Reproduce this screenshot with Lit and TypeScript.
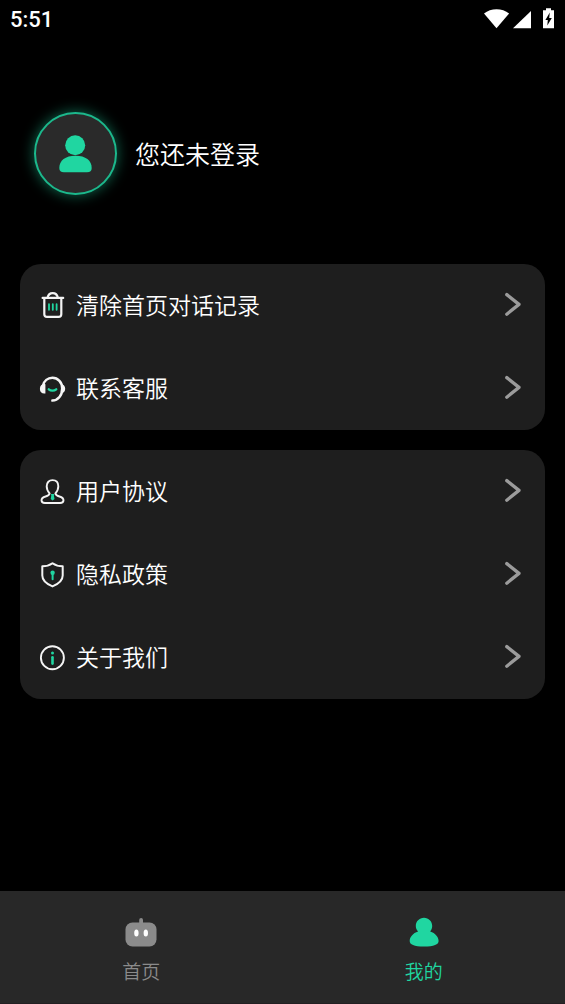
import { LitElement, html, css, svg } from "lit";
import { customElement, property, state } from "lit/decorators.js";

const icons = {
  trash: svg`
    <path stroke-width="2.200" d="M9.600 6.500C10.200 3.600 11.900 2.100 14.700 2.100s4.500 1.500 5.100 4.400" />
    <path stroke-width="2.200" d="M4.600 6.900h20.600M6.300 7.500v15.700c0 1.800 1 2.600 2.700 2.600h11.600c1.700 0 2.700-.8 2.700-2.600V7.500" />
    <path class="accent" stroke-width="1.800" d="M11 13.200v5.600M14.800 13.200v5.600M18.600 13.200v5.600" />`,
  service: svg`
    <path d="M5 11.500C6 7 9.700 3.700 14.400 3.700c5.500 0 9.900 4.600 9.900 10.900 0 6.700-4.200 11.800-9.900 12" stroke-width="2.500" />
    <path class="solid" d="M7.400 10.200v9.200c-3.300.6-5.500-1.300-5.500-4.500s2.200-5.200 5.500-4.700zM23 10.200c2.600 0 4.200 1.900 4.200 4.500s-1.500 4.600-4.400 4.600z" />
    <path class="accent" stroke-width="2.400" d="M10.800 15.300c2 1.700 5.400 1.700 7.400 0" />`,
  user: svg`
    <path stroke-width="1.900" d="M11.600 16.400C9.800 14.600 8.700 12 8.700 9.300c0-3.900 2.400-6.200 5.800-6.200s5.800 2.300 5.800 6.200c0 2.700-1.100 5.300-2.900 7.100.2 2 1.900 2.500 4 3.100 2.600.7 4.100 1.900 4.100 3.800 0 1.900-1.300 2.700-3.400 2.700H6.900c-2.100 0-3.400-.8-3.400-2.700 0-1.900 1.500-3.100 4.100-3.800 2.100-.6 3.800-1.100 4-3.100z" />
    <path class="accent-fill" d="M12.900 17h3.400l-.4 1.500.6 3.500-1.900 1.500-1.900-1.500.6-3.500z" />`,
  shield: svg`
    <path stroke-width="2" d="M14.500 3.200c2.800 2 6.100 3.100 10.200 3.100v9.200c0 5.200-4.400 8.500-10.200 10.900C8.700 24 4.300 20.700 4.300 15.500V6.300c4.100 0 7.400-1.100 10.200-3.100z" />
    <circle class="accent-fill" cx="14.600" cy="12.700" r="2.200" />
    <path class="accent" stroke-width="2" d="M14.600 14v5.200" />`,
  info: svg`
    <circle cx="14.400" cy="14.800" r="11.500" stroke-width="1.900" />
    <circle class="accent-fill" cx="14.500" cy="10" r="1.500" />
    <path class="accent" stroke-width="2.600" d="M14.500 14.300v6.300" />`,
};

type IconName = keyof typeof icons;

@customElement("menu-row")
class MenuRow extends LitElement {
  @property() icon: IconName = "info";
  @property() label = "";

  static styles = css`
    :host { display: block; }
    .row {
      width: 100%;
      height: 83px;
      display: flex;
      align-items: center;
      padding: 0 24px 0 18px;
      border: 0;
      background: none;
      color: #fff;
      font: inherit;
      text-align: left;
      cursor: pointer;
    }
    .icon {
      flex: none;
      width: 29px;
      height: 29px;
      margin-right: 9px;
      fill: none;
      stroke: #f4f4f4;
      stroke-width: 2;
      stroke-linecap: round;
      stroke-linejoin: round;
    }
    .solid { fill: #f4f4f4; stroke: none; }
    .accent { stroke: #20d6a1; }
    .accent-fill { fill: #20d6a1; stroke: none; }
    .label { flex: 1; padding-bottom: 3px; font-size: 23px; line-height: 34px; }
    .chevron { flex: none; width: 16px; height: 29px; }
  `;

  render() {
    return html`
      <button class="row" type="button">
        <svg class="icon" viewBox="0 0 29 29" aria-hidden="true">${icons[this.icon]}</svg>
        <span class="label">${this.label}</span>
        <svg class="chevron" viewBox="0 0 16 29" fill="none" stroke="#9b9b9b" stroke-width="3.300" stroke-linecap="round" stroke-linejoin="round" aria-hidden="true">
          <path d="M1.800 3.600 14 13.400 1.800 23.200" />
        </svg>
      </button>`;
  }
}

@customElement("app-root")
class AppRoot extends LitElement {
  @state() private tab = "mine";

  static styles = css`
    :host {
      display: flex;
      flex-direction: column;
      min-height: 100vh;
      background: #000;
      color: #fff;
      font-family: "Noto Sans CJK SC", sans-serif;
      font-weight: 350;
    }
    .status {
      display: flex;
      align-items: center;
      justify-content: space-between;
      height: 40px;
      padding: 0 10px;
      font: 500 22px/26px Roboto, sans-serif;
    }
    .signals { display: block; width: 72px; height: 24px; }
    .profile {
      display: flex;
      align-items: center;
      gap: 18px;
      padding: 72px 34px 69px;
    }
    .avatar {
      display: flex;
      box-sizing: border-box;
      width: 83px;
      height: 83px;
      padding: 0;
      border: 2px solid #1cb88c;
      border-radius: 50%;
      background: #2a2a2a;
      box-shadow: 0 0 14px #20d6a180;
    }
    .avatar svg { width: 79px; height: 79px; }
    .name { margin: 0; padding-bottom: 2px; font-size: 25px; line-height: 36px; font-weight: inherit; }
    .menus {
      flex: 1;
      display: flex;
      flex-direction: column;
      gap: 20px;
      padding: 0 20px 20px;
    }
    .card { background: #1e1e1e; border-radius: 21px; }
    .tabs {
      display: grid;
      grid-template-columns: 1fr 1fr;
      background: #282828;
      border-bottom: 1px solid #231f22;
    }
    .tab {
      display: flex;
      flex-direction: column;
      align-items: center;
      gap: 10px;
      padding: 26px 0 18px;
      border: 0;
      background: none;
      color: #8b8b8b;
      font: inherit;
      font-size: 19px;
      line-height: 28px;
      cursor: pointer;
    }
    .tab svg { width: 32px; height: 30px; }
    .active { color: #20d6a1; }
  `;

  private tabButton(id: string, label: string, art: unknown) {
    return html`
      <button class="tab ${this.tab === id ? "active" : ""}" type="button" @click=${() => (this.tab = id)}>
        <svg viewBox="0 0 32 30" fill="currentColor" aria-hidden="true">${art}</svg>
        <span>${label}</span>
      </button>`;
  }

  render() {
    return html`
      <header class="status">
        <span>5:51</span>
        <svg class="signals" viewBox="0 0 72 24" fill="#fff" aria-hidden="true">
          <path d="M1 5.600C7.800-.1 19.300-.1 26.100 5.600L13.500 20.300z" />
          <path d="M48 3v17.200H30z" />
          <path d="M63 2.200V.2h5v2h3v18H60v-18z" />
          <path d="M66.800 4.500 62.400 12h2.400l-.5 5.600L68.800 10h-2.600z" fill="#000" />
        </svg>
      </header>
      <section class="profile">
        <button class="avatar" type="button" aria-label="登录">
          <svg viewBox="0 0 79 79" fill="#20d6a1" aria-hidden="true">
            <circle cx="39.200" cy="31.200" r="10" />
            <path d="M23.300 54c0-7.500 6-12.300 16.200-12.300S55.700 46.500 55.700 54c0 3-1.600 4.200-4.600 4.200H27.900c-3 0-4.600-1.200-4.600-4.200z" />
          </svg>
        </button>
        <h1 class="name">您还未登录</h1>
      </section>
      <main class="menus">
        <section class="card">
          <menu-row icon="trash" label="清除首页对话记录"></menu-row>
          <menu-row icon="service" label="联系客服"></menu-row>
        </section>
        <section class="card">
          <menu-row icon="user" label="用户协议"></menu-row>
          <menu-row icon="shield" label="隐私政策"></menu-row>
          <menu-row icon="info" label="关于我们"></menu-row>
        </section>
      </main>
      <nav class="tabs">
        ${this.tabButton("home", "首页", svg`
          <rect x="14.200" y="1" width="3.800" height="8" rx="1.900" />
          <rect x=".5" y="5.500" width="31" height="24" rx="7" />
          <ellipse cx="11.400" cy="16" rx="2.200" ry="3.600" fill="#fff" />
          <ellipse cx="20.800" cy="16" rx="2.200" ry="3.600" fill="#fff" />`)}
        ${this.tabButton("mine", "我的", svg`
          <path d="M16 .8c4.700 0 8.200 3.600 8.200 8.200 0 2-.8 4-2 5.500 5.200 1.600 8.400 5.600 8.400 9.500 0 3.600-4.600 5.500-14.600 5.500S1.700 27.600 1.700 24c0-3.900 3.200-7.900 8.400-9.500-1.500-1.500-2.300-3.500-2.300-5.500C7.800 4.400 11.300.8 16 .8z" />`)}
      </nav>`;
  }
}
